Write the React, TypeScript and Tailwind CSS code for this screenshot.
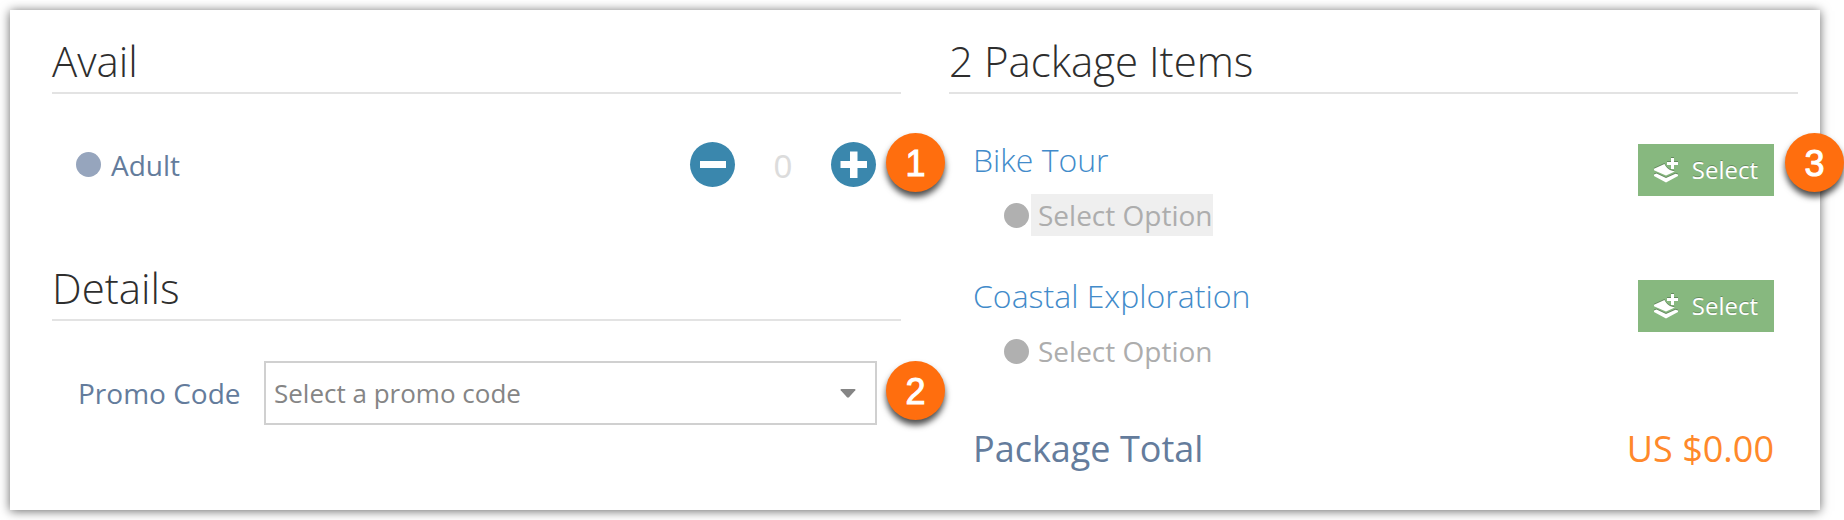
import { useState, type ReactNode } from "react";

function Badge({ children, className }: { children: ReactNode; className: string }) {
  return (
    <span
      className={`absolute left-full flex size-[59px] items-center justify-center rounded-full bg-[#ff6e0e] pt-[2px] font-['Liberation_Sans',sans-serif] text-[36px] leading-none text-white shadow-[0_5px_6px_rgba(0,0,0,0.7)] [-webkit-text-stroke:1px_white] ${className}`}
    >
      {children}
    </span>
  );
}

function Heading({ children }: { children: ReactNode }) {
  return (
    <h2 className="border-b-2 border-[#e3e3e3] pt-px pb-[3px] text-[42px] leading-[56px] font-light text-[#2e2e2e]">
      {children}
    </h2>
  );
}

function RoundButton({ label, path, onClick }: { label: string; path: string; onClick: () => void }) {
  return (
    <button type="button" aria-label={label} onClick={onClick} className="size-[45px] rounded-full bg-[#3a87ad]">
      <svg viewBox="0 0 45 45" className="size-full" fill="#fff">
        <path d={path} />
      </svg>
    </button>
  );
}

function StackPlusIcon() {
  return (
    <svg
      viewBox="0 0 24 25"
      className="h-[25px] w-6 overflow-visible drop-shadow-[0_-1px_0_rgba(0,0,0,0.25)]"
      fill="#fff"
      aria-hidden="true"
    >
      <path d="M17 0h3v4h4v3h-4v4h-3V7h-4V4h4z" />
      <path d="M10.500 6c1 2 2.200 3.700 4 5 1.900 1.400 4 2 6.300 2.400L12 17.500 0 12.200V10.800z" />
      <path d="M0 16.500 2.500 15.500 12 20l9.500-4.300L24 16.500v1.500L12 24.500 0 18z" />
    </svg>
  );
}

function PackageItem({ name, highlighted, badge }: { name: string; highlighted?: boolean; badge?: string }) {
  return (
    <li className="flex items-start justify-between">
      <div>
        <a href="#" className="block text-[32px] leading-[44px] font-light text-[#428bca]">
          {name}
        </a>
        <div className="mt-3 ml-[31px] flex items-center gap-[2px] text-[28px] leading-[42px] text-[#adadad]">
          <span className="size-[25px] rounded-full bg-[#b0b0b0]" />
          <span className={highlighted ? "bg-[#efefef] pl-[7px]" : "pl-[7px]"}>Select Option</span>
        </div>
      </div>
      <div className="relative mt-[6px]">
        <button
          type="button"
          aria-label={`Select ${name}`}
          className="flex h-[52px] items-center gap-[14px] bg-[#87b87f] px-4 text-[24px] text-white [text-shadow:0_-1px_0_rgba(0,0,0,0.25)]"
        >
          <StackPlusIcon />
          Select
        </button>
        {badge && <Badge className="-top-[11px] ml-[11px]">{badge}</Badge>}
      </div>
    </li>
  );
}

export default function App() {
  const [count, setCount] = useState(0);
  return (
    <div className="overflow-x-clip bg-white pt-[10px] pr-6 pb-[10px] pl-[10px] font-['Open_Sans',sans-serif]">
      <main className="grid grid-cols-2 gap-12 bg-white pt-[22px] pr-[22px] pb-9 pl-[42px] shadow-[0_1px_10px_rgba(0,0,0,0.6)]">
        <div>
          <section>
            <Heading>Avail</Heading>
            <div className="relative mr-[25px] ml-6 mt-12 flex items-center justify-between">
              <label htmlFor="adult" className="flex items-center gap-[10px] text-[28px] leading-[42px] text-[#647c9c]">
                <span className="size-[25px] rounded-full bg-[#96a5bd]" />
                Adult
              </label>
              <div className="flex items-center">
                <RoundButton
                  label="Remove one adult"
                  path="M10 19h26v7H10z"
                  onClick={() => setCount(Math.max(0, count - 1))}
                />
                <input
                  id="adult"
                  inputMode="numeric"
                  value={count}
                  onChange={(e) => setCount(Number(e.target.value) || 0)}
                  className="w-24 pt-1 text-center font-['Liberation_Sans',sans-serif] text-[33px] leading-9 text-[#dcdcdc] outline-none"
                />
                <RoundButton
                  label="Add one adult"
                  path="M19 9.500h7.500V19H36v7h-9.500v10H19V26H9.500v-7H19z"
                  onClick={() => setCount(count + 1)}
                />
              </div>
              <Badge className="-top-[9px] ml-[10px]">1</Badge>
            </div>
          </section>

          <section className="mt-[72px]">
            <Heading>Details</Heading>
            <div className="relative mr-6 ml-[26px] mt-10 flex items-center">
              <label htmlFor="promo" className="w-[186px] text-[28px] leading-[42px] text-[#647c9c]">
                Promo Code
              </label>
              <div className="relative flex-1">
                <select
                  id="promo"
                  className="block h-16 w-full appearance-none border-2 border-[#d0d0d0] bg-white pr-12 pl-2 text-[26px] text-[#858585]"
                >
                  <option>Select a promo code</option>
                </select>
                <svg
                  viewBox="0 0 16 9"
                  className="pointer-events-none absolute top-7 right-[21px] h-[9px] w-4"
                  fill="#858585"
                  aria-hidden="true"
                >
                  <path d="M1.500 0h13q1.500 0 .8 1.200L9 8.200q-1 .9-2 0L.7 1.200Q0 0 1.500 0z" />
                </svg>
              </div>
              <Badge className="top-0 ml-[9px]">2</Badge>
            </div>
          </section>
        </div>

        <section>
          <Heading>2 Package Items</Heading>
          <ul className="mx-6 mt-11 flex flex-col gap-[38px]">
            <PackageItem name="Bike Tour" highlighted badge="3" />
            <PackageItem name="Coastal Exploration" />
          </ul>
          <div className="mx-6 mt-[52px] flex justify-between text-[36px] leading-[50px]">
            <span className="text-[#647c9c]">Package Total</span>
            <span className="text-[#ff892a]">US $0.00</span>
          </div>
        </section>
      </main>
    </div>
  );
}
